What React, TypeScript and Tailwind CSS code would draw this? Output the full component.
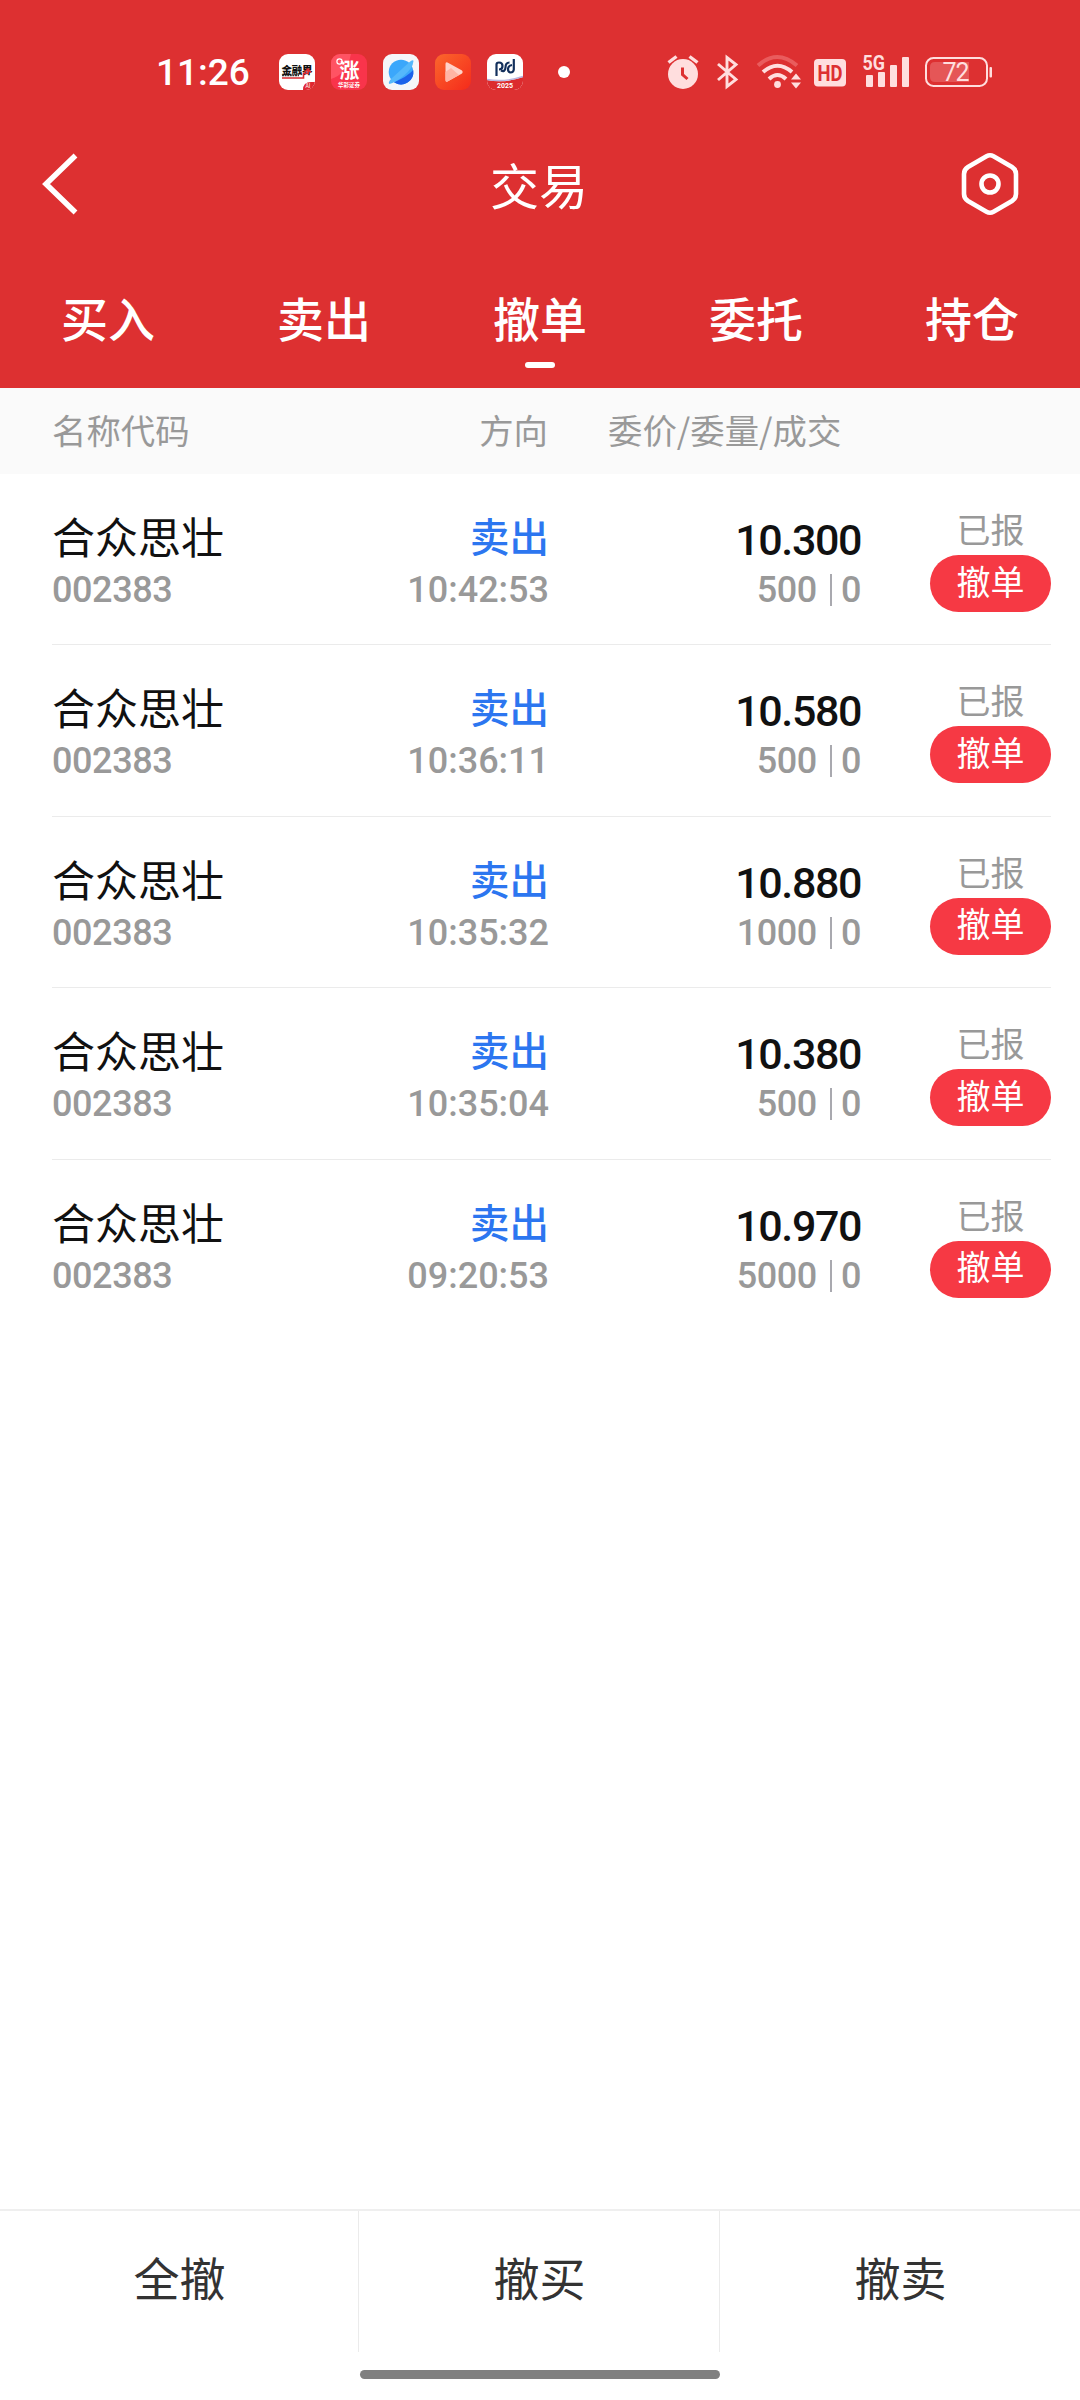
import type { ReactNode } from "react";

type Order = {
  name: string;
  code: string;
  side: string;
  time: string;
  price: string;
  quantity: number;
  filled: number;
  status: string;
};

const TABS = ["买入", "卖出", "撤单", "委托", "持仓"];
const ACTIVE_TAB = "撤单";
const ACTIONS = ["全撤", "撤买", "撤卖"];

const ORDERS: Order[] = [
  { name: "合众思壮", code: "002383", side: "卖出", time: "10:42:53", price: "10.300", quantity: 500, filled: 0, status: "已报" },
  { name: "合众思壮", code: "002383", side: "卖出", time: "10:36:11", price: "10.580", quantity: 500, filled: 0, status: "已报" },
  { name: "合众思壮", code: "002383", side: "卖出", time: "10:35:32", price: "10.880", quantity: 1000, filled: 0, status: "已报" },
  { name: "合众思壮", code: "002383", side: "卖出", time: "10:35:04", price: "10.380", quantity: 500, filled: 0, status: "已报" },
  { name: "合众思壮", code: "002383", side: "卖出", time: "09:20:53", price: "10.970", quantity: 5000, filled: 0, status: "已报" },
];

function AppIcon({ children }: { children: ReactNode }) {
  return (
    <svg width="36" height="36" viewBox="0 0 36 36" className="shrink-0 rounded-[9px] font-['Noto_Sans_CJK_SC',sans-serif]">
      {children}
    </svg>
  );
}

function NotificationIcons() {
  return (
    <div className="ml-[29px] flex items-center gap-4">
      <AppIcon>
        <rect width="36" height="36" fill="#fff" />
        <text x="2.5" y="19.5" fontSize="10.5" fontWeight="900" fill="#111" textLength="31">金融界</text>
        <path d="M3 21.5H20" stroke="#333" strokeWidth="1.6" strokeDasharray="2 .6" />
        <path d="M3 24H24.5V19.5H29V16M25.5 18.5L29 15L32 18.5" fill="none" stroke="#dc2b30" strokeWidth="1.6" />
        <path d="M24 36Q24 28 32 28H36V36Z" fill="#df2631" />
        <text x="26.5" y="34" fontSize="5.5" fill="#fff">AI</text>
      </AppIcon>
      <AppIcon>
        <rect width="36" height="36" fill="#f9344b" />
        <path d="M0 0H20Q16 20 0 25Z" fill="#ff5363" />
        <text x="8.5" y="24" fontSize="20" fontWeight="700" fill="#fff">涨</text>
        <circle cx="8.500" cy="7.500" r="2.600" fill="none" stroke="#fff" strokeWidth="1.2" />
        <text x="7" y="32.5" fontSize="5.5" fontWeight="700" fill="#fff" textLength="22">华彩证券</text>
      </AppIcon>
      <AppIcon>
        <rect width="36" height="36" fill="#f5f6f9" />
        <circle cx="18" cy="18" r="12.3" fill="#3ba7fb" />
        <path d="M30.2 16A12.3 12.3 0 0 1 11 28.2Q24 23 30.2 16Z" fill="#1c62ea" />
        <path d="M26 8.500Q30 5 30.500 7Q30 14 21 21.500Q12 29 6.500 30Q4.500 29 8 25Z" fill="#55b8fb" />
      </AppIcon>
      <AppIcon>
        <defs>
          <linearGradient id="player" x1="0" y1="0" x2="1" y2="1">
            <stop stopColor="#fb672c" />
            <stop offset="1" stopColor="#f52a1b" />
          </linearGradient>
        </defs>
        <rect width="36" height="36" fill="url(#player)" />
        <path d="M10.500 10Q10.500 7.500 12.500 8.500L27 16.500Q28.500 18 27 19.500L12.500 27.500Q10.500 28.500 10.500 26Z" fill="#ffd2c8" />
        <path d="M10.500 18L16 14L24 21L12.500 27.500Q10.500 28.500 10.500 26Z" fill="#ffb5a4" />
      </AppIcon>
      <AppIcon>
        <rect width="36" height="36" fill="#fff" />
        <path d="M0 26Q18 29.500 36 23V36H0Z" fill="#dc2b2e" />
        <path d="M0 25.500Q18 28.500 36 22.500" fill="none" stroke="#b9b6df" strokeWidth="1.500" />
        <path d="M9.500 22V10.500Q9.500 8.500 12 8.500Q15.500 8.500 15.500 12Q15.500 15.500 12 15.500" fill="none" stroke="#13305c" strokeWidth="2.200" />
        <path d="M14 16.500Q18 18.500 18.500 13.500Q18.500 8.500 22.500 8.500" fill="none" stroke="#13305c" strokeWidth="2.200" />
        <path d="M26.800 5V15.500Q26.500 18.500 23.500 18.500Q20.800 18 21 14.500Q21.500 11.500 25 11" fill="none" stroke="#13305c" strokeWidth="2.200" />
        <text x="18" y="33.8" fontSize="7" fontWeight="700" textAnchor="middle" fill="#fff" className="font-['Roboto',sans-serif]">2025</text>
      </AppIcon>
      <span className="ml-[19px] h-3 w-3 rounded-full bg-white" />
    </div>
  );
}

function SystemIcons() {
  return (
    <svg width="330" height="46" viewBox="665 49 330 46" className="absolute top-[49px] left-[665px] font-['Roboto',sans-serif]" fill="#ffdede">
      {/* alarm */}
      <circle cx="683" cy="74" r="15" />
      <path d="M668.500 62.500L676.500 56.500M697.500 62.500L689.500 56.500" stroke="#ffdede" strokeWidth="3.400" />
      <path d="M682.500 67.500V74.500L687.500 79" fill="none" stroke="#dd3031" strokeWidth="3" />
      {/* bluetooth */}
      <path d="M718 64L736 79.500L727 86.500V57.500L736 64.500L718 80" fill="none" stroke="#ffdede" strokeWidth="2.900" />
      {/* wifi */}
      <g fill="none" strokeWidth="4">
        <path d="M758 65.500Q777 48.500 797 65.500" stroke="#e95c5d" />
        <path d="M763 72Q777.500 59.500 792 72" stroke="#ffdede" />
        <path d="M769 79Q777.500 71 786 79" stroke="#ffdede" />
      </g>
      <circle cx="777.500" cy="84.500" r="3.400" />
      <path d="M791 79.500L796 73.500L801 79.500ZM791 82.500H801L796 88.500Z" />
      {/* hd */}
      <rect x="814" y="59" width="32" height="27.500" rx="4" />
      <text x="830" y="80.500" fontSize="22" fontWeight="700" textAnchor="middle" fill="#dd3031" textLength="25" lengthAdjust="spacingAndGlyphs">HD</text>
      {/* signal */}
      <text x="862.500" y="70" fontSize="20.500" fontWeight="700" textLength="22.500" lengthAdjust="spacingAndGlyphs">5G</text>
      <rect x="866" y="75" width="7" height="12" rx="1" />
      <rect x="878" y="72" width="7" height="15" rx="1" />
      <rect x="890" y="65" width="7" height="22" rx="1" />
      <rect x="902" y="57" width="7" height="30" rx="1" />
      {/* battery */}
      <rect x="926" y="58" width="61" height="28" rx="7.500" fill="none" stroke="#ffdede" strokeWidth="2" />
      <path d="M935 62H969V82H935Q930 82 930 77V67Q930 62 935 62Z" fill="#e55657" />
      <rect x="989.500" y="67" width="2.500" height="10.500" rx="1" />
      <text x="956" y="81.300" fontSize="25" textAnchor="middle" textLength="27">72</text>
    </svg>
  );
}

function StatusBar() {
  return (
    <div className="relative flex h-36 w-full items-center pl-[156px]">
      <span className="w-[94px] font-['Roboto',sans-serif] text-[37px] leading-none font-medium">11:26</span>
      <NotificationIcons />
      <SystemIcons />
    </div>
  );
}

function Header() {
  return (
    <header className="h-[388px] bg-[#dd3031] text-white">
      <StatusBar />
      <div className="flex h-20 items-center justify-between pr-[58px] pl-[38px]">
        <svg width="62" height="64" viewBox="0 0 62 64" fill="none" stroke="currentColor" strokeWidth="5.500">
          <path d="M37.500 3.500L8 32L37.500 60.500" />
        </svg>
        <h1 className="mb-[1px] ml-[20px] text-[49px] leading-none">交易</h1>
        <svg width="64" height="64" viewBox="0 0 64 64" fill="none" stroke="currentColor" strokeWidth="4.600">
          <path d="M28.500 4.300Q32 2.300 35.500 4.300L54 15Q58 17.500 58 22V42Q58 46.500 54 49L35.500 59.700Q32 61.700 28.500 59.700L10 49Q6 46.500 6 42V22Q6 17.500 10 15Z" />
          <circle cx="32" cy="32" r="8.500" />
        </svg>
      </div>
      <nav className="mt-[65px] grid grid-cols-5">
        {TABS.map((tab) => (
          <div key={tab} className="flex flex-col items-center">
            <span className="text-[47px] leading-[56px] font-medium">{tab}</span>
            {tab === ACTIVE_TAB && <span className="mt-[17px] h-1.5 w-[30px] rounded-full bg-white" />}
          </div>
        ))}
      </nav>
    </header>
  );
}

function OrderRow({ order }: { order: Order }) {
  return (
    <li className="mr-[29px] ml-[52px] grid h-[171.4px] grid-cols-[248px_248px_313px_190px] border-b border-[#ebebeb] pt-[37px] last:border-b-0">
      <div>
        <p className="text-[43px] leading-[48px] text-[#111]">{order.name}</p>
        <p className="mt-[11px] font-['Roboto',sans-serif] text-[36px] leading-10 font-medium tracking-[-0.4px] text-[#999]">{order.code}</p>
      </div>
      <div className="text-right">
        <p className="mr-[-1px] text-[39.5px] leading-[48px] font-medium text-[#2c76f0]">{order.side}</p>
        <p className="mt-[11px] mr-[-1px] font-['Roboto',sans-serif] text-[36px] leading-10 font-medium text-[#999]">{order.time}</p>
      </div>
      <div className="font-['Roboto',sans-serif]">
        <p className="mt-[5px] text-right text-[43px] leading-[48px] font-medium tracking-[-1.4px] text-[#111]">{order.price}</p>
        <div className="mt-1.5 flex items-center justify-end text-[36px] leading-10 font-medium tracking-[-0.4px] text-[#999]">
          <span>{order.quantity}</span>
          <span className="mr-[9px] ml-[13px] h-8 w-0.5 bg-[#a9a9af]" />
          <span>{order.filled}</span>
        </div>
      </div>
      <div className="flex flex-col items-end">
        <p className="mt-[-2px] w-[121px] text-center text-[34px] leading-10 text-[#999]">{order.status}</p>
        <button className="mt-1.5 h-[57px] w-[121px] rounded-full bg-[#f63944] pb-1.5 text-[34px] leading-none text-white">撤单</button>
      </div>
    </li>
  );
}

export default function App() {
  return (
    <div className="flex h-[2400px] w-[1080px] flex-col overflow-hidden bg-white font-['Noto_Sans_CJK_SC',sans-serif]">
      <Header />
      <div className="flex h-[86px] items-center bg-[#fafafa] pb-1 pl-[52px] text-[34.4px] leading-none text-[#999]">
        <span className="w-[248px]">名称代码</span>
        <span className="w-[248px] text-right">方向</span>
        <span className="ml-[60px]">委价/委量/成交</span>
      </div>
      <ul>
        {ORDERS.map((order) => (
          <OrderRow key={order.time} order={order} />
        ))}
      </ul>
      <footer className="mt-auto h-[191px] border-t-2 border-[#efefef]">
        <div className="grid h-[141px] grid-cols-[359px_361px_360px]">
          {ACTIONS.map((action) => (
            <button key={action} className="border-r border-[#ebebeb] pb-3 pl-[1px] text-[46px] leading-none text-[#333] last:border-r-0">
              {action}
            </button>
          ))}
        </div>
        <div className="mx-auto mt-[18px] h-[9px] w-[360px] rounded-full bg-[#808080]" />
      </footer>
    </div>
  );
}
